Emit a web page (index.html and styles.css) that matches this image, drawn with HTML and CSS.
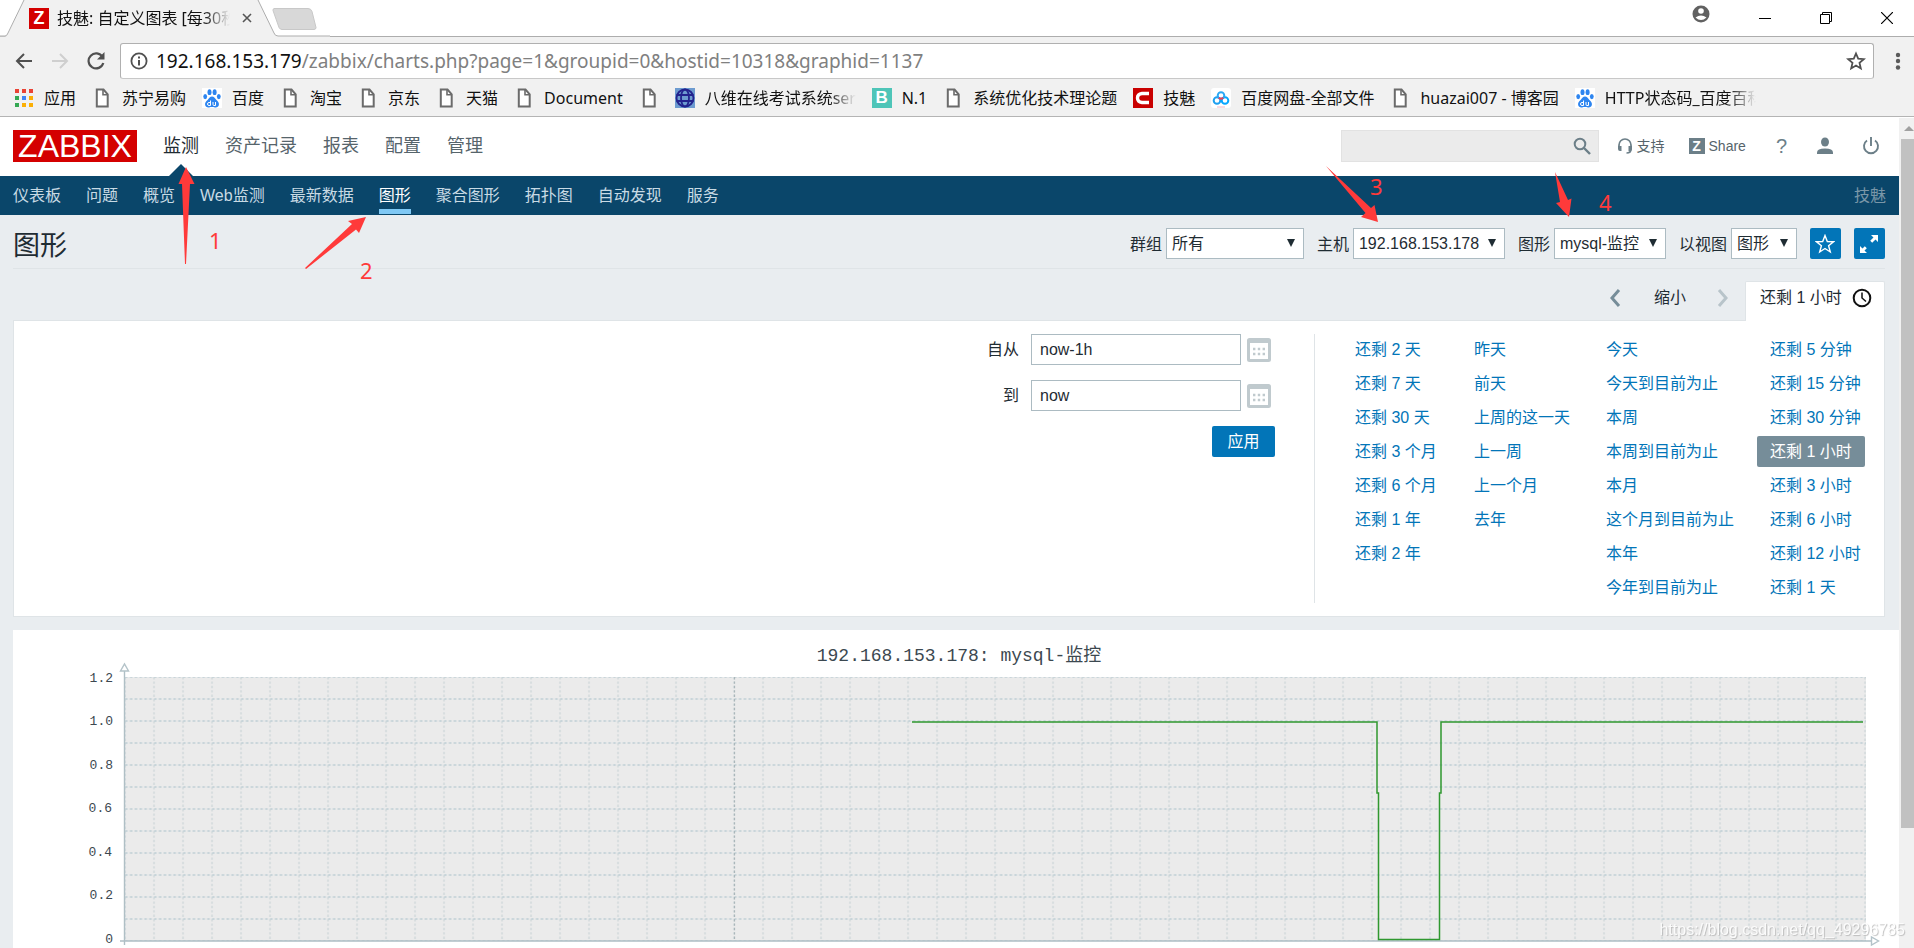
FILE: index.html
```html
<!DOCTYPE html>
<html lang="zh-CN">
<head>
<meta charset="utf-8">
<title>技魅: 自定义图表 [每30秒刷新]</title>
<link rel="stylesheet" href="styles.css">
</head>
<body>
<svg class="defs" aria-hidden="true">
  <symbol id="doc" viewBox="0 0 20 20"><path d="M4.8 1.500h6.700l4.200 4.800v12.200H4.800z" fill="#fff" stroke="#6b6b6b" stroke-width="2"/><path d="M11 1.500v5.300h5" fill="none" stroke="#6b6b6b" stroke-width="1.600"/></symbol>
  <symbol id="paw" viewBox="0 0 20 20"><rect width="20" height="20" fill="#fff"/><g fill="#2d85f0"><ellipse cx="7.500" cy="4.200" rx="2" ry="2.900"/><ellipse cx="12.600" cy="4.200" rx="2" ry="2.900"/><ellipse cx="3.200" cy="8.600" rx="1.900" ry="2.600"/><ellipse cx="16.800" cy="8.600" rx="1.900" ry="2.600"/><path d="M10 8.500c2 0 2.800 1.800 4.200 3.200 2 1.900 3 3 2.700 5-.3 2.300-2.200 3-4 2.700-2-.4-3.800-.4-5.800 0-1.800.3-3.700-.4-4-2.700-.3-2 .7-3.100 2.700-5C7.200 10.300 8 8.500 10 8.500z"/></g><path d="M8.500 12.500v5H7a1.500 1.500 0 010-3h1.500M11 14v2.500q0 1 1 1h1.500V14" fill="none" stroke="#fff"/></symbol>
  <symbol id="cal" viewBox="0 0 24 24"><rect x="1.500" y="1.500" width="21" height="21" rx="1" fill="#fff" stroke="#c0cace" stroke-width="3"/><path d="M1 1h22v4H1z" fill="#c0cace"/><path d="M6 11h12M6 16h12" stroke="#c0cace" stroke-width="2.400" stroke-dasharray="2.400 2.400"/></symbol>
</svg>

<div class="browser">
  <div class="tabstrip">
    <svg class="tabshape" width="330" height="37" viewBox="0 0 330 37" aria-hidden="true"><path d="M0 36.500h5q2 0 3-3L24 0H258L274 33q1 3 4 3h52V37H0z" fill="#f1f1f1"/><path d="M0 36h5q2 0 3-3L24 0M258 0L274 33q1 3 4 3h52" fill="none" stroke="#adadad"/><path d="M274 8.500h34q3 0 4 3l4 16q0 2-2 2h-32q-2 0-3-2l-6-17q0-2 1-2z" fill="#d8d8d8" stroke="#c8c8c8"/></svg>
    <div class="tab">
      <span class="favicon">Z</span>
      <span class="tabtitle">技魅: 自定义图表 [每30秒</span>
      <button class="plain" aria-label="关闭标签页"><svg width="10" height="10"><path d="M1 1l8 8M9 1l-8 8" stroke="#555" stroke-width="1.600"/></svg></button>
    </div>
    <div class="winctl">
      <button class="plain" aria-label="用户"><svg class="person" width="18" height="18" viewBox="0 0 18 18"><circle cx="9" cy="9" r="8.500" fill="#616161"/><circle cx="9" cy="6" r="2.800" fill="#fff"/><path d="M3.500 12.500q5.500-4 11 0-5.500 5-11 0z" fill="#fff"/></svg></button>
      <button class="plain" aria-label="最小化"><svg width="12" height="12"><path d="M0 6.500h12" stroke="#000"/></svg></button>
      <button class="plain" aria-label="还原"><svg width="12" height="12"><path d="M.5 2.500h9v9h-9zM2.500 2.500v-2h9v9h-2" fill="none" stroke="#000"/></svg></button>
      <button class="plain" aria-label="关闭"><svg width="12" height="12"><path d="M0 0l12 12M12 0L0 12" stroke="#000" stroke-width="1.200"/></svg></button>
    </div>
  </div>
  <div class="toolbar">
    <button class="plain" aria-label="后退"><svg width="18" height="18"><path d="M17 9H2M9 2L2 9l7 7" fill="none" stroke="#505050" stroke-width="2"/></svg></button>
    <button class="plain" aria-label="前进"><svg width="18" height="18"><path d="M1 9h15M9 2l7 7-7 7" fill="none" stroke="#cfcfcf" stroke-width="2"/></svg></button>
    <button class="plain" aria-label="刷新"><svg width="18" height="18"><path d="M15.500 5A7.500 7.500 0 1 0 16.300 11" fill="none" stroke="#505050" stroke-width="2.200"/><path d="M17.500 0v7.500H10z" fill="#505050"/></svg></button>
    <div class="omnibox">
      <svg width="18" height="18"><circle cx="9" cy="9" r="7.600" fill="none" stroke="#505050" stroke-width="1.800"/><path d="M9 8v5.500M9 4.500v2" stroke="#505050" stroke-width="2"/></svg>
      <span class="url"><b>192.168.153.179</b>/zabbix/charts.php?page=1&amp;groupid=0&amp;hostid=10318&amp;graphid=1137</span>
      <button class="plain" aria-label="收藏"><svg width="20" height="20"><path d="M10 2.500l2.200 5.200 5.600.5-4.300 3.700 1.300 5.500-4.800-2.900-4.800 2.900 1.300-5.500L2.200 8.200l5.600-.5z" fill="none" stroke="#505050" stroke-width="1.800"/></svg></button>
    </div>
    <button class="plain" aria-label="菜单"><svg width="6" height="18" fill="#5a5a5a"><circle cx="3" cy="3" r="2.200"/><circle cx="3" cy="9" r="2.200"/><circle cx="3" cy="15.500" r="2.200"/></svg></button>
  </div>
  <nav class="bookmarks" aria-label="书签">
    <a href="#"><svg width="20" height="20"><g><path d="M1 1h4v4H1zM8 1h4v4H8zM15 1h4v4h-4z" fill="#ea4335"/><path d="M1 8h4v4H1zM1 15h4v4H1z" fill="#34a853"/><path d="M8 8h4v4H8z" fill="#4285f4"/><path d="M15 8h4v4h-4zM8 15h4v4H8zM15 15h4v4h-4z" fill="#fbaf05"/></g></svg><span>应用</span></a>
    <a href="#"><svg width="20" height="20"><use href="#doc"/></svg><span>苏宁易购</span></a>
    <a href="#"><svg width="20" height="20"><use href="#paw"/></svg><span>百度</span></a>
    <a href="#"><svg width="20" height="20"><use href="#doc"/></svg><span>淘宝</span></a>
    <a href="#"><svg width="20" height="20"><use href="#doc"/></svg><span>京东</span></a>
    <a href="#"><svg width="20" height="20"><use href="#doc"/></svg><span>天猫</span></a>
    <a href="#"><svg width="20" height="20"><use href="#doc"/></svg><span>Document</span></a>
    <a href="#" aria-label="书签"><svg width="20" height="20"><use href="#doc"/></svg></a>
    <a href="#"><svg width="20" height="20"><rect width="20" height="20" fill="#6d9bd0"/><g fill="none" stroke="#23238e" stroke-width="1.800"><circle cx="10" cy="10" r="8.500"/><ellipse cx="10" cy="10" rx="4" ry="8.500"/><path d="M1.500 7h17M1.500 13h17"/></g></svg><span class="fade">八维在线考试系统ser</span></a>
    <a href="#"><span class="ico teal">B</span><span>N.1</span></a>
    <a href="#"><svg width="20" height="20"><use href="#doc"/></svg><span>系统优化技术理论题</span></a>
    <a href="#"><svg width="20" height="20"><rect width="20" height="20" fill="#c90000"/><path d="M16 5.500H9Q4.500 6 4.500 10T9 14.500h7" fill="none" stroke="#fff" stroke-width="3.400"/></svg><span>技魅</span></a>
    <a href="#"><svg width="20" height="20"><rect width="20" height="20" rx="3" fill="#fff"/><g fill="none" stroke-width="2"><circle cx="6" cy="12.500" r="3.300" stroke="#1ea0f0"/><circle cx="14" cy="12.500" r="3.300" stroke="#06a7ff"/><circle cx="10" cy="7.500" r="3.300" stroke="#2aa8f5"/><path d="M7.800 9.800q2.200 2 4.400 0" stroke="#e8425a"/></g><path d="M6 19h8" stroke="#f0b8c4"/></svg><span>百度网盘-全部文件</span></a>
    <a href="#"><svg width="20" height="20"><use href="#doc"/></svg><span>huazai007 - 博客园</span></a>
    <a href="#"><svg width="20" height="20"><use href="#paw"/></svg><span class="fade">HTTP状态码_百度百科</span></a>
  </nav>
</div>

<div class="viewport">
  <div class="page">
    <header class="top">
      <a class="logo" href="#">ZABBIX</a>
      <nav class="mainmenu">
        <a class="on" href="#">监测</a><a href="#">资产记录</a><a href="#">报表</a><a href="#">配置</a><a href="#">管理</a>
      </nav>
      <form class="search">
        <input type="text" aria-label="搜索">
        <button class="plain" type="button" aria-label="搜索"><svg width="18" height="18"><circle cx="7" cy="7" r="5.300" fill="none" stroke="#6c7f88" stroke-width="2"/><path d="M11 11l6 6" stroke="#6c7f88" stroke-width="2.400"/></svg></button>
      </form>
      <div class="tools">
        <a class="support" href="#"><svg width="16" height="16"><path d="M2 11V7a6 6 0 0112 0v4q0 4-4.500 4" fill="none" stroke="#6c7f88" stroke-width="1.700"/><path d="M1 8h3.500v5H3q-2 0-2-2zM15 8h-3.500v5H13q2 0 2-2z" fill="#6c7f88"/></svg>支持</a>
        <a class="share" href="#"><span class="zbox">Z</span>Share</a>
        <a class="help" href="#">?</a>
        <a class="user" href="#" aria-label="用户"><svg width="18" height="18" fill="#6c7f88"><ellipse cx="9" cy="5" rx="4" ry="4.600"/><path d="M1 17v-1.500q0-4 8-4t8 4V17z"/></svg></a>
        <a class="power" href="#" aria-label="退出"><svg width="18" height="18"><path d="M5 3.500a7 7 0 108 0M9 0v9" fill="none" stroke="#6c7f88" stroke-width="1.900"/></svg></a>
      </div>
    </header>
    <nav class="submenu">
      <a href="#">仪表板</a><a href="#">问题</a><a href="#">概览</a><a href="#">Web监测</a><a href="#">最新数据</a><a class="on" href="#">图形</a><a href="#">聚合图形</a><a href="#">拓扑图</a><a href="#">自动发现</a><a href="#">服务</a>
      <span class="server">技魅</span>
    </nav>
    <main>
      <div class="titlebar">
        <h1>图形</h1>
        <form class="controls">
          <label for="group">群组</label><span class="sel w-group"><select id="group"><option>所有</option></select></span>
          <label for="host">主机</label><span class="sel w-host"><select id="host"><option>192.168.153.178</option></select></span>
          <label for="graph">图形</label><span class="sel w-graph"><select id="graph"><option>mysql-监控</option></select></span>
          <label for="view">以视图</label><span class="sel w-view"><select id="view"><option>图形</option></select></span>
          <button class="iconbtn" type="button" aria-label="收藏"><svg width="20" height="20"><path d="M10 1.500l2.300 6 6.200.2-4.900 4 1.700 6.300L10 14.500 4.700 18l1.700-6.300-4.900-4 6.200-.2z" fill="none" stroke="#fff" stroke-width="1.400"/></svg></button>
          <button class="iconbtn" type="button" aria-label="全屏"><svg width="20" height="20"><path d="M12 1h7v7l-2.500-2.500-3.300 3.300-2-2 3.300-3.300zM8 19H1v-7l2.500 2.500 2.300-2.300 2 2-2.300 2.300z" fill="#fff"/></svg></button>
        </form>
      </div>
      <div class="timetabs">
        <button class="plain prev" aria-label="向前"><svg width="12" height="18"><path d="M10 1L3 9l7 8" fill="none" stroke="#768d99" stroke-width="3"/></svg></button>
        <button class="plain zoom">缩小</button>
        <button class="plain next" aria-label="向后"><svg width="12" height="18"><path d="M2 1l7 8-7 8" fill="none" stroke="#b8c4ca" stroke-width="3"/></svg></button>
        <button class="plain timetab">还剩 1 小时<svg width="20" height="20"><circle cx="10" cy="10" r="8.300" fill="none" stroke="#111" stroke-width="2"/><path d="M10 4.500V10l4 3.500" fill="none" stroke="#111" stroke-width="1.500"/></svg></button>
      </div>
      <section class="filter">
        <form class="range">
          <label for="from">自从</label><input id="from" type="text" value="now-1h"><button class="plain" type="button" aria-label="选择开始日期"><svg width="24" height="24"><use href="#cal"/></svg></button>
          <label for="to">到</label><input id="to" type="text" value="now"><button class="plain" type="button" aria-label="选择结束日期"><svg width="24" height="24"><use href="#cal"/></svg></button>
          <button class="apply" type="button">应用</button>
        </form>
        <div class="presets">
          <div><a href="#">还剩 2 天</a><a href="#">还剩 7 天</a><a href="#">还剩 30 天</a><a href="#">还剩 3 个月</a><a href="#">还剩 6 个月</a><a href="#">还剩 1 年</a><a href="#">还剩 2 年</a></div>
          <div><a href="#">昨天</a><a href="#">前天</a><a href="#">上周的这一天</a><a href="#">上一周</a><a href="#">上一个月</a><a href="#">去年</a></div>
          <div><a href="#">今天</a><a href="#">今天到目前为止</a><a href="#">本周</a><a href="#">本周到目前为止</a><a href="#">本月</a><a href="#">这个月到目前为止</a><a href="#">本年</a><a href="#">今年到目前为止</a></div>
          <div><a href="#">还剩 5 分钟</a><a href="#">还剩 15 分钟</a><a href="#">还剩 30 分钟</a><a class="on" href="#">还剩 1 小时</a><a href="#">还剩 3 小时</a><a href="#">还剩 6 小时</a><a href="#">还剩 12 小时</a><a href="#">还剩 1 天</a></div>
        </div>
      </section>
      <svg class="chart" viewBox="0 0 1886 340" role="img" aria-label="192.168.153.178: mysql-监控">
        <defs>
          <pattern id="grid" x="126.500" y="47" width="29" height="22" patternUnits="userSpaceOnUse">
            <path d="M14.500 0V22" stroke="#c9d3d6" stroke-width="1.200" stroke-dasharray="2.400 2"/>
            <path d="M0 22H29M0 0H29" stroke="#c9d5da" stroke-width="2" stroke-dasharray="2.600 2.233"/>
          </pattern>
        </defs>
        <rect width="1886" height="340" fill="#fff"/>
        <text class="ctitle" x="946" y="31" text-anchor="middle">192.168.153.178: mysql-监控</text>
        <rect x="111" y="47" width="1742" height="264" fill="#ebebeb"/>
        <rect x="111" y="47" width="1742" height="264" fill="url(#grid)"/>
        <path d="M721.500 47V311" stroke="#aab6ba" stroke-width="1.200" stroke-dasharray="2.400 2"/>
        <path d="M111.500 41V315M107 311H1858" fill="none" stroke="#afbfc5" stroke-width="1.400"/>
        <path d="M107.500 41h8l-4-7zM1858.500 307v8l7-4z" fill="#fff" stroke="#b4c3c9" stroke-width="1.400"/>
        <path d="M899 92H1364V163h1.500V309.500H1426.500V163h1.500V92H1850" fill="none" stroke="#2f982f" stroke-width="1.500"/>
        <g class="ylab" text-anchor="end"><text x="100" y="52">1.2</text><text x="100" y="95">1.0</text><text x="100" y="139">0.8</text><text x="99" y="182">0.6</text><text x="99" y="226">0.4</text><text x="100" y="269">0.2</text><text x="100" y="313">0</text></g>
      </svg>
    </main>
  </div>
  <div class="scrollbar"><i class="arrow"></i><i class="thumb"></i></div>
</div>

<svg class="notes left" width="420" height="300" aria-hidden="true">
  <path d="M186 167l8.500 17-4.500 0-4 80h-1l-3-80h-3.500zM366 217l-7 16-3-3.500L306 269l-1-1 47-44-4-3z"/>
  <text x="209" y="249">1</text><text x="360" y="279">2</text>
</svg>
<svg class="notes right" width="614" height="300" aria-hidden="true">
  <path d="M26 166l45 42 3.500-3L78 222l-17-5 4.500-4zM255 172l13 28 3.500-1.500L269 217l-13-14 4-1z"/>
  <text x="70" y="195">3</text><text x="299" y="211">4</text>
</svg>
<div class="watermark">https://blog.csdn.net/qq_49296785</div>
</body>
</html>
```
FILE: styles.css
```css
* { box-sizing: border-box; }
body {
  margin: 0;
  height: 100vh;
  overflow: hidden;
  position: relative;
  display: flex;
  flex-direction: column;
  font: 16px/20px "Liberation Sans", "Noto Sans CJK SC", sans-serif;
  color: #1f2c33;
}
a { text-decoration: none; color: inherit; }
svg { display: block; flex: none; }
button, input, select { font: inherit; color: inherit; }
.plain { background: none; border: 0; padding: 0; flex: none; }
.defs { position: absolute; width: 0; height: 0; }

/* browser frame */
.browser {
  flex: none;
  background: #f1f1f1;
  border-bottom: 1px solid #b4b4b4;
  font-family: "Noto Sans", "Noto Sans CJK SC", sans-serif;
  color: #111;
}
.tabstrip {
  position: relative;
  height: 37px;
  background: #fff;
  border-bottom: 1px solid #adadad;
  display: flex;
  justify-content: space-between;
}
.tabshape { position: absolute; left: 0; top: 0; }
.tab { position: relative; display: flex; align-items: center; padding-left: 29px; }
.favicon {
  width: 20px; height: 21px;
  background: #d40000; color: #fff;
  font: bold 18px/21px "Liberation Sans", sans-serif;
  text-align: center;
}
.tabtitle {
  width: 173px; margin: 0 12px 0 8px;
  overflow: hidden; white-space: nowrap;
  -webkit-mask-image: linear-gradient(90deg, #000 85%, transparent);
  mask-image: linear-gradient(90deg, #000 85%, transparent);
}
.winctl { display: flex; align-items: center; gap: 49px; padding-right: 21px; }
.winctl .person { margin-bottom: 8px; }
.toolbar { display: flex; align-items: center; height: 48px; padding: 0 13px 0 15px; gap: 18px; }
.omnibox {
  flex: 1; height: 36px;
  margin: 0 3px 0 -3px;
  background: #fff;
  border: 1px solid #b0b0b0; border-bottom-color: #c8c8c8; border-radius: 3px;
  display: flex; align-items: center; gap: 8px; padding: 0 7px 0 9px;
}
.url { flex: 1; font-size: 19px; color: #808080; }
.url b { font-weight: 400; color: #111; }
.bookmarks { display: flex; gap: 16px; height: 31px; padding: 2px 0 0 14px; white-space: nowrap; overflow: hidden; }
.bookmarks a { display: flex; align-items: center; gap: 10px; height: 22px; flex: none; }
.fade {
  width: 151px; overflow: hidden;
  -webkit-mask-image: linear-gradient(90deg, #000 82%, transparent);
  mask-image: linear-gradient(90deg, #000 82%, transparent);
}
.ico { width: 20px; height: 20px; text-align: center; color: #fff; font: bold 17px/20px "Liberation Sans", sans-serif; }
.teal { background: #4ec5b8; }

/* zabbix page */
.viewport { flex: 1; min-height: 0; display: flex; background: #e9edf0; border-top: 1px solid #fff; }
.page { flex: 1; min-width: 0; overflow: hidden; }
.top { height: 58px; background: #fff; display: flex; align-items: center; padding: 0 19px 2px 13px; }
.logo {
  width: 124px; height: 32px; background: #d40000; color: #fff;
  font-size: 32px; line-height: 33px; text-align: center;
}
.mainmenu { align-self: stretch; display: flex; gap: 26px; margin: 0 0 -2px 26px; flex: 1; font-size: 18px; line-height: 56px; color: #56646b; }
.mainmenu .on { color: #1f2c33; position: relative; }
.mainmenu .on::after {
  content: ""; position: absolute; left: 50%; bottom: 0; margin-left: -12px;
  border: 12px solid transparent; border-top: 0; border-bottom-color: #0a466a;
}
.search { display: flex; align-items: center; width: 258px; height: 32px; background: #ebebeb; border: 1px solid #e2e2e2; padding-right: 7px; }
.search input { flex: 1; min-width: 0; border: 0; background: none; }
.tools { display: flex; align-items: center; margin-left: 18px; font-size: 14px; color: #56646b; }
.tools a { display: flex; align-items: center; gap: 4px; }
.share { margin-left: 24px; }
.zbox { width: 16px; height: 16px; background: #6c7f88; color: #fff; font: bold 14px/16px "Liberation Sans", sans-serif; text-align: center; }
.help { margin-left: 30px; font-size: 20px; color: #6c7f88; }
.user { margin-left: 29px; }
.power { margin-left: 28px; }
.submenu { height: 39px; background: #0a466a; color: #c8dae4; display: flex; gap: 25px; padding: 0 13px; line-height: 39px; }
.submenu .on { color: #fff; border-bottom: 5px solid #7fc8f4; height: 38px; }
.server { margin-left: auto; color: #7a97a8; }
main { padding: 0 0 0 13px; }
.titlebar { display: flex; align-items: center; justify-content: space-between; height: 54px; margin-right: 14px; border-bottom: 1px solid #dfe4e7; padding-top: 4px; }
h1 { margin: 0; font-size: 27px; line-height: 36px; font-weight: 400; padding-top: 4px; }
.controls { display: flex; align-items: center; }
.controls label { margin-right: 4px; margin-left: 13px; padding-top: 2px; }
.sel { position: relative; }
.sel select { width: 100%; height: 31px; appearance: none; background: #fff; border: 1px solid #acbbc2; border-radius: 0; padding: 1px 5px 0; }
.sel::after {
  content: ""; position: absolute; right: 9px; top: 11px; pointer-events: none;
  border: 4px solid transparent; border-top: 8px solid #1f2c33; border-bottom: 0;
}
.w-group { width: 138px; }
.w-host { width: 152px; }
.w-graph { width: 112px; }
.w-view { width: 66px; }
.iconbtn { width: 31px; height: 31px; margin-left: 13px; padding: 5px; border: 0; border-radius: 2px; background: #0275b8; }
.timetabs { display: flex; justify-content: flex-end; align-items: center; margin: 12px 14px 0 0; height: 39px; }
.zoom { margin: 0 31px 0 33px; padding-bottom: 6px; }
.prev, .next { padding-bottom: 5px; }
.timetab {
  position: relative; z-index: 1; margin-left: 16px; margin-bottom: -1px;
  height: 40px; width: 140px; padding: 0 12px 7px 14px;
  display: flex; align-items: center; justify-content: space-between; white-space: nowrap;
  background: #fff; border: 1px solid #dfe4e7; border-bottom: 0; border-radius: 2px 2px 0 0;
}
.filter { display: flex; justify-content: flex-end; background: #fff; border: 1px solid #dfe4e7; margin-right: 14px; padding: 13px 21px 13px 0; }
.range { display: grid; grid-template-columns: auto 210px 28px; grid-auto-rows: 31px; gap: 15px 6px; align-content: start; align-items: center; margin-right: 39px; }
.range label { text-align: right; padding-right: 6px; }
.range input { height: 31px; border: 1px solid #acbbc2; padding: 0 8px; width: 100%; }
.apply { grid-column: 1 / -1; justify-self: end; width: 63px; height: 31px; border: 0; border-radius: 2px; background: #0275b8; color: #fff; padding: 0; }
.presets { display: grid; grid-template-columns: 119px 132px 164px 106px; border-left: 1px solid #dfe4e7; padding-left: 27px; color: #0275b8; }
.presets div { display: flex; flex-direction: column; gap: 3px; align-items: flex-start; }
.presets a { padding: 0 13px; line-height: 31px; white-space: nowrap; }
.presets .on { background: #768d99; color: #fff; border-radius: 2px; }
.chart { width: 100%; height: auto; margin-top: 13px; }
.ctitle { font: 18px "Liberation Mono", "Noto Sans CJK SC", monospace; fill: #3c4850; }
.ylab { font: 13px "Liberation Mono", monospace; fill: #3c4850; }

.scrollbar { width: 15px; flex: none; background: #f1f1f1; display: flex; flex-direction: column; align-items: flex-end; overflow: hidden; }
.arrow { border: 5px solid transparent; border-top: 0; border-bottom-color: #a0a0a0; margin: 8px 0; }
.thumb { width: 13px; height: 83%; background: #c1c1c1; }

/* red markers drawn over the page */
.notes { position: absolute; top: 0; pointer-events: none; fill: #ff3a3a; font: 22px "Noto Sans", sans-serif; }
.left { left: 0; }
.right { right: 0; }
.watermark { position: absolute; right: 9px; bottom: 8px; font-size: 16px; color: #fff; opacity: .8; text-shadow: 1px 1px 1px #b0b0b0; }
```
